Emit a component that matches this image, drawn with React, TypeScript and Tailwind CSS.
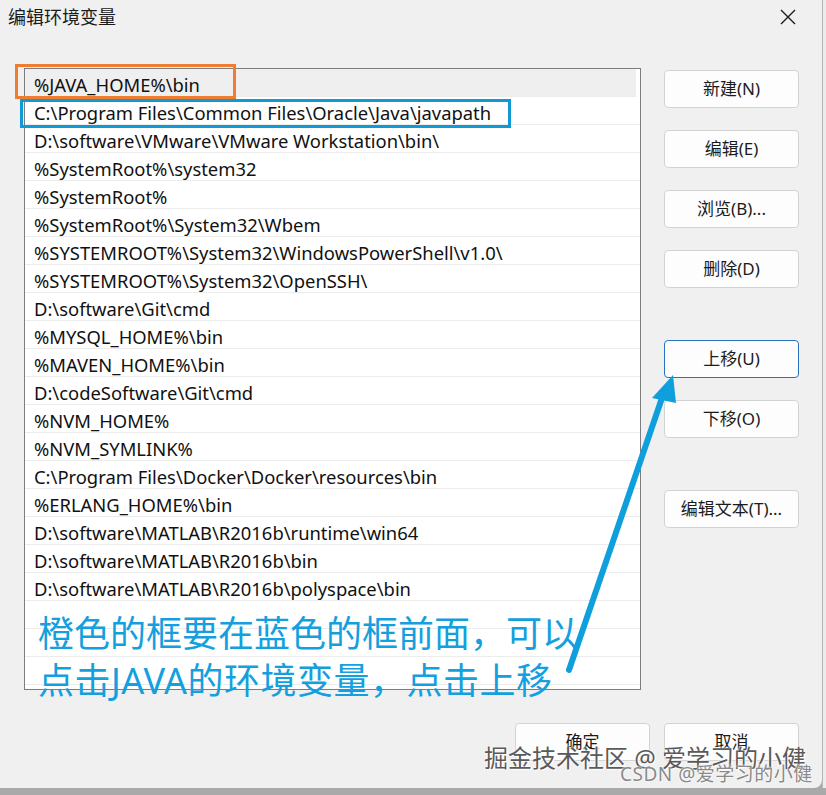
import React from 'react';

const paths = [
  '%JAVA_HOME%\\bin',
  'C:\\Program Files\\Common Files\\Oracle\\Java\\javapath',
  'D:\\software\\VMware\\VMware Workstation\\bin\\',
  '%SystemRoot%\\system32',
  '%SystemRoot%',
  '%SystemRoot%\\System32\\Wbem',
  '%SYSTEMROOT%\\System32\\WindowsPowerShell\\v1.0\\',
  '%SYSTEMROOT%\\System32\\OpenSSH\\',
  'D:\\software\\Git\\cmd',
  '%MYSQL_HOME%\\bin',
  '%MAVEN_HOME%\\bin',
  'D:\\codeSoftware\\Git\\cmd',
  '%NVM_HOME%',
  '%NVM_SYMLINK%',
  'C:\\Program Files\\Docker\\Docker\\resources\\bin',
  '%ERLANG_HOME%\\bin',
  'D:\\software\\MATLAB\\R2016b\\runtime\\win64',
  'D:\\software\\MATLAB\\R2016b\\bin',
  'D:\\software\\MATLAB\\R2016b\\polyspace\\bin',
];

const rows = [...paths, '', '', '', ''];

function Btn({ label, focused = false }: { label: string; focused?: boolean }) {
  return (
    <button
      className={`w-[135px] h-[38px] rounded-[4px] bg-[#fdfdfd] text-[17px] text-[#1b1b1b] flex items-center justify-center border ${
        focused ? 'border-[#2a72c0]' : 'border-[#d3d3d3]'
      }`}
    >
      {label}
    </button>
  );
}

export default function App() {
  return (
    <div
      className="relative w-[826px] h-[795px] overflow-hidden bg-[#a9a9a9]"
      style={{ fontFamily: '"Noto Sans", "Noto Sans CJK SC", sans-serif' }}
    >
      <div className="absolute right-0 top-0 w-[4px] h-[788px] bg-[#ececec] border-l border-[#b5b5b5]" />
      <div className="w-[822px] h-[788px] bg-[#f0f0f0] rounded-br-[8px] flex flex-col pl-[24px] pr-[23px]">
        {/* title bar */}
        <div className="h-[34px] flex items-center justify-between -ml-[16px] -mr-[6px]">
          <span className="text-[18px] text-[#1a1a1a] leading-none">编辑环境变量</span>
          <svg width="18" height="18" viewBox="0 0 18 18" className="mr-[8px]">
            <path d="M2 2 L16 16 M16 2 L2 16" stroke="#1a1a1a" strokeWidth="1.4" fill="none" />
          </svg>
        </div>

        <div className="flex gap-[23px] mt-[34px]">
          {/* list */}
          <div className="w-[618px] h-[622px] border border-[#7d7d7d] bg-white overflow-hidden">
            {rows.map((p, i) => (
              <div
                key={i}
                className={`h-[28px] flex items-center pl-[9px] pt-[4px] text-[18.4px] text-[#111] border-b border-[#ececec] whitespace-nowrap ${
                  i === 0 ? 'bg-[#efefef] mr-[4px]' : ''
                }`}
              >
                {p}
              </div>
            ))}
          </div>

          {/* buttons */}
          <div className="flex flex-col pt-[2px]">
            <div className="flex flex-col gap-[22px]">
              <Btn label="新建(N)" />
              <Btn label="编辑(E)" />
              <Btn label="浏览(B)..." />
              <Btn label="删除(D)" />
            </div>
            <div className="flex flex-col gap-[22px] mt-[52px]">
              <Btn label="上移(U)" focused />
              <Btn label="下移(O)" />
            </div>
            <div className="mt-[52px]">
              <Btn label="编辑文本(T)..." />
            </div>
          </div>
        </div>

        <div className="flex justify-end gap-[14px] mt-[33px]">
          <Btn label="确定" />
          <Btn label="取消" />
        </div>
      </div>

      {/* annotation boxes */}
      <div className="absolute left-[15px] top-[64px] w-[221px] h-[35px] border-[3px] border-[#ef7d31]" />
      <div className="absolute left-[20px] top-[99px] w-[491px] h-[29px] border-[3px] border-[#0f9ad6]" />

      {/* annotation text */}
      <div className="absolute left-[38px] top-[610px] text-[36px] leading-[47px] text-[#14a0de] whitespace-nowrap">
        <div>橙色的框要在蓝色的框前面，可以</div>
        <div className="tracking-[0.5px]">点击JAVA的环境变量，点击上移</div>
      </div>

      {/* arrow */}
      <svg className="absolute left-0 top-0" width="826" height="795" viewBox="0 0 826 795">
        <line x1="569" y1="670" x2="663" y2="395" stroke="#0e9fdc" strokeWidth="6" strokeLinecap="round" />
        <polygon points="673,375 652,398 676,403" fill="#0e9fdc" />
      </svg>

      {/* watermarks */}
      <div
        className="absolute left-[484px] top-[746px] text-[24px] leading-none text-[#5a5a5a] whitespace-nowrap"
        style={{ textShadow: '0 0 2px #fff, 0 0 2px #fff, 1px 1px 0 #fff' }}
      >
        掘金技术社区 @ 爱学习的小健
      </div>
      <div
        className="absolute left-[620px] top-[765px] text-[19px] tracking-[0.5px] leading-none text-[#8a8a8a] whitespace-nowrap"
        style={{ textShadow: '0 0 2px #fff, 0 0 2px #fff' }}
      >
        CSDN @爱学习的小健
      </div>
    </div>
  );
}
